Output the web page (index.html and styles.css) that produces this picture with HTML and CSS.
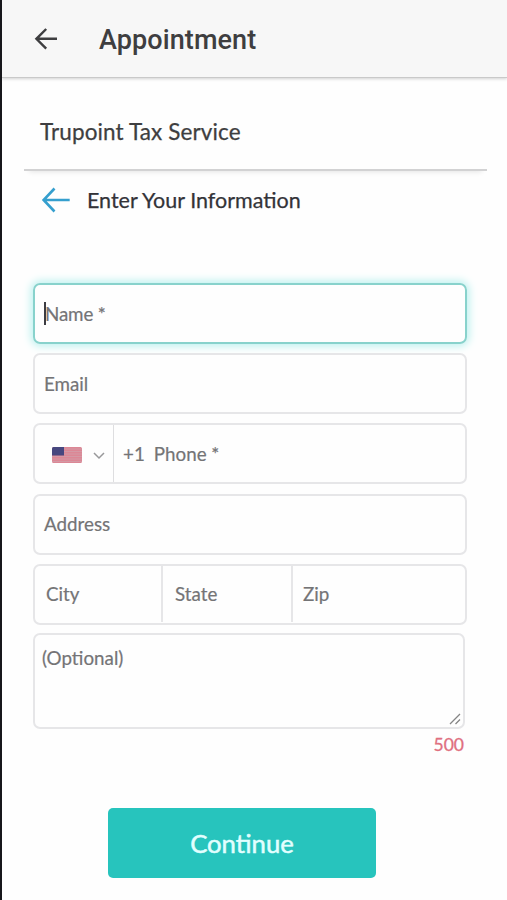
FILE: index.html
```html
<!DOCTYPE html>
<html lang="en">
<head>
<meta charset="utf-8">
<title>Appointment</title>
<link rel="stylesheet" href="styles.css">
</head>
<body>
<header class="appbar">
  <svg class="appbar-back" width="24" height="24" viewBox="0 0 24 24" fill="none" stroke="#3e3e40" stroke-width="2.4"><path d="M24 11.8H3.500M13.200 2L3.400 11.8l9.800 9.800"/></svg>
  <h1 class="appbar-title">Appointment</h1>
</header>
<main class="page">
  <h2 class="business"><span class="business-name">Trupoint Tax Service</span></h2>
  <div class="step">
    <svg class="step-back" width="30" height="26" viewBox="0 0 30 26" fill="none" stroke="#359fce" stroke-width="2.6"><path d="M28.700 13H3M13.500 1.500L2.600 13l10.900 11.500"/></svg>
    <span class="step-title">Enter Your Information</span>
  </div>
  <form class="form">
    <div class="field focused"><span class="caret"></span><span class="label name">Name *</span></div>
    <div class="field"><span class="label">Email</span></div>
    <div class="field phone">
      <div class="country">
        <svg class="flag" width="30" height="16" viewBox="0 0 30 16"><defs><clipPath id="flag"><rect width="30" height="16" rx="1.5"/></clipPath></defs><g clip-path="url(#flag)"><path fill="#dc8795" d="M0 0h30v16H0z"/><path stroke="#d499a5" stroke-width="1" d="M0 2h30M0 4.500h30M0 7h30M0 9.500h30M0 12h30M0 14.500h30"/><path fill="#47477f" d="M0 0h12v8.500H0z"/></g></svg>
        <svg class="chevron" width="12" height="8" viewBox="0 0 12 8" fill="none" stroke="#98989a" stroke-width="1.5"><path d="M1 1l5 5 5-5"/></svg>
      </div>
      <span class="label code">+1</span><span class="label">Phone *</span>
    </div>
    <div class="field"><span class="label">Address</span></div>
    <div class="field split">
      <div class="part city"><span class="label">City</span></div>
      <div class="part state"><span class="label">State</span></div>
      <div class="part zip"><span class="label">Zip</span></div>
    </div>
    <div class="notes">
      <span class="label">(Optional)</span>
      <svg class="grip" width="12" height="12" viewBox="0 0 12 12" stroke="#858585" stroke-width="1.3"><path d="M1 11L11 1M6.500 11L11 6.500"/></svg>
    </div>
    <div class="counter">500</div>
    <div class="submit"><span class="submit-text">Continue</span></div>
  </form>
</main>
</body>
</html>
```
FILE: styles.css
```css
* { box-sizing: border-box; }
html { background: #fefefe; }
body {
  margin: 0;
  height: 900px;
  overflow: hidden;
  border-left: 2px solid #17171b;
  background: #fefefe;
  font-family: Lato, "Liberation Sans", sans-serif;
  color: #3e3e40;
}
h1, h2 { margin: 0; font-weight: 400; }
svg { display: block; flex: none; }
span { white-space: nowrap; }
.appbar {
  height: 78px;
  display: flex;
  align-items: center;
  padding: 1px 0 0 31px;
  background: #f7f7f7;
  border-bottom: 1px solid #c9c9c9;
  box-shadow: 0 1px 3px rgba(0, 0, 0, .18);
}
.appbar-title {
  margin-left: 42px;
  padding-top: 1px;
  font: 500 27px/32px Roboto, sans-serif;
  letter-spacing: .1px;
}
.page { padding: 0 20px 0 22px; }
.business {
  height: 93px;
  padding: 40px 0 0 16px;
  border-bottom: 2px solid #d2d2d3;
  box-shadow: 0 6px 5px -5px rgba(0, 0, 0, .1);
  font-size: 22.5px;
  line-height: 28px;
  letter-spacing: .12px;
}
.business-name, .step-title { -webkit-text-stroke: .25px currentColor; }
.step {
  display: flex;
  align-items: center;
  height: 58px;
  padding: 0 0 0 17px;
}
.step-title {
  margin: -1px 0 0 16px;
  font-size: 21.5px;
  color: #333338;
}
.form { padding: 54px 0 0 9px; }
.field {
  display: flex;
  align-items: center;
  width: 434px;
  height: 61px;
  margin-bottom: 9.2px;
  padding-left: 9px;
  border: 2px solid #e6e6e8;
  border-radius: 7px;
}
.label {
  font-size: 18.8px;
  line-height: 24px;
  color: #747476;
  -webkit-text-stroke: .2px currentColor;
}
.focused {
  border-color: #88d2cc;
  box-shadow: 0 0 9px 2px #b9f0ee;
}
.caret { width: 2px; height: 23px; background: #3c3c42; }
.name { margin-left: -1px; letter-spacing: -.15px; }
.phone { padding-left: 0; }
.country {
  display: flex;
  align-items: center;
  gap: 11px;
  align-self: stretch;
  width: 79px;
  margin-right: 9px;
  padding: 3px 0 0 17px;
  border-right: 1px solid #dedee0;
}
.chevron { margin-top: 2px; }
.code { margin-right: 9px; }
.split { padding: 0; align-items: stretch; }
.part { display: flex; align-items: center; height: 56px; }
.city, .state { border-right: 2px solid #e6e6e8; }
.city { width: 128px; padding-left: 11px; }
.state { width: 130px; padding-left: 12px; }
.zip { padding-left: 10px; }
.notes {
  display: flex;
  justify-content: space-between;
  width: 432px;
  height: 96px;
  margin-top: -1px;
  padding: 11px 2px 2px 7px;
  border: 2px solid #e6e6e8;
  border-radius: 7px;
}
.grip { align-self: flex-end; }
.counter {
  width: 431px;
  height: 32px;
  text-align: right;
  font-size: 17.5px;
  line-height: 32px;
  color: #e06f80;
  -webkit-text-stroke: .3px currentColor;
}
.submit {
  display: flex;
  align-items: center;
  justify-content: center;
  width: 268px;
  height: 70px;
  margin: 47px 0 0 75px;
  border-radius: 5px;
  background: #27c4bd;
}
.submit-text { font-size: 25.7px; color: #e2ffff; -webkit-text-stroke: .5px #e2ffff; }
```
